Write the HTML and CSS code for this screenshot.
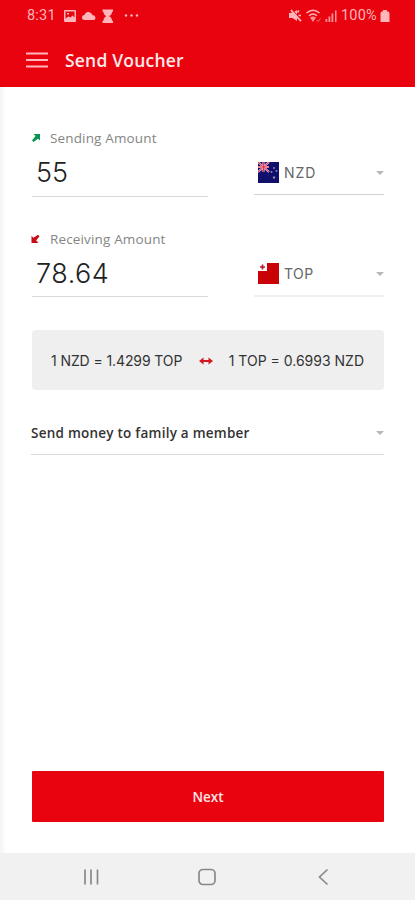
FILE: index.html
```html
<!DOCTYPE html>
<html lang="en">
<head>
<meta charset="utf-8">
<meta name="viewport" content="width=device-width, initial-scale=1">
<title>Send Voucher</title>
<link rel="stylesheet" href="styles.css">
</head>
<body>
<div class="screen">
  <header class="header">
    <div class="status">
      <span class="clock">8:31</span>
      <svg class="status-left" width="80" height="16" viewBox="0 0 80 16">
        <path fill-rule="evenodd" d="M2 2h10a1 1 0 0 1 1 1v10a1 1 0 0 1-1 1H2a1 1 0 0 1-1-1V3a1 1 0 0 1 1-1zm.5 1.500v7l3-2 2 1 2-2 2 2v-6zM4 5h2v1.500H4z"/>
        <path d="M21.500 12a2.500 2.500 0 0 1 0-5 4 4 0 0 1 7-1.500l1 1.800a2.400 2.400 0 0 1 1 4.700z"/>
        <path d="M39.500 1.500H50v2l-1 .5c0 2.500-1.500 3.500-3 4.200 1.500.7 3 1.800 3 4.300l1 .5v2H39.500v-2l1-.5c0-2.500 1.500-3.600 3-4.300-1.500-.7-3-1.700-3-4.200l-1-.5z"/>
        <circle cx="63" cy="7.500" r="1.200"/><circle cx="68.500" cy="7.500" r="1.200"/><circle cx="74" cy="7.500" r="1.200"/>
      </svg>
      <svg class="status-right" width="50" height="16" viewBox="0 0 50 16">
        <path d="M1 5h3.500L9 2v11L4.500 10H1z"/>
        <path d="M3 2L13 13" fill="none" stroke="#ffb5b9" stroke-width="2"/>
        <path d="M9.500 4.500l1.500-2M10.500 7.500H13" fill="none" stroke="#ffb5b9" stroke-width="1.500"/>
        <path d="M4 1.500L13.500 12" fill="none" stroke="#e8030f" stroke-width=".8"/>
        <g fill="none" stroke="#ffb5b9" stroke-width="1.400"><path d="M18.500 5c4-3.500 9-3.500 13 0M21 7.800c2.500-2.200 5.500-2.200 8 0"/></g>
        <path d="M25 14l-3-4.500q3-2 6 0z" opacity=".8"/>
        <path d="M28.500 12l1.500 1.500 2.500-3" fill="none" stroke="#f9747c" stroke-width="1"/>
        <path d="M37.500 11h1.800v3h-1.800zM40.500 8.500h1.800V14h-1.800zM43.500 5.500h1.800V14h-1.800zM47 2.500h1.500V14H47z" opacity=".8"/>
      </svg>
      <span class="percent">100%</span>
      <svg class="battery" width="10" height="14" viewBox="0 0 10 14"><path d="M3 1h4v1.500h1.500L9.500 4v9H.5V4L1.500 2.500H3z"/></svg>
    </div>
    <div class="toolbar">
      <svg class="menu" width="22" height="16" viewBox="0 0 22 16"><path d="M0 1.500h22M0 8h22M0 14.500h22"/></svg>
      <h1 class="title">Send Voucher</h1>
    </div>
  </header>
  <main class="content">
    <section class="amount">
      <div class="field">
        <div class="label">
          <svg width="10" height="10" viewBox="0 0 10 10" fill="#079552"><path d="M2.500 1H9v6.500L7 5.700 2.500 9 1 7.500 4.600 3z"/></svg>
          <span class="send-label">Sending Amount</span>
        </div>
        <div class="value value-send">55</div>
      </div>
      <div class="currency">
        <svg class="flag" width="21" height="21" viewBox="0 0 21 21">
          <path fill="#100f6b" d="M0 0h21v21H0z"/>
          <path d="M0 0l11 10M11 0L0 10M5.500 0v10M0 5h11" stroke="#f0c4d5" stroke-width="2"/>
          <path d="M0 0l11 10M11 0L0 10M5.500 0v10M0 5h11" stroke="#e33a54" stroke-width="1"/>
          <g fill="#8c83b2"><circle cx="16" cy="6" r="1"/><circle cx="13.500" cy="10" r="1"/><circle cx="18.500" cy="9" r="1"/><circle cx="16" cy="15.500" r="1.200"/></g>
        </svg>
        <span class="code nzd">NZD</span>
        <i class="caret"></i>
      </div>
    </section>
    <section class="amount">
      <div class="field field-receive">
        <div class="label">
          <svg width="10" height="10" viewBox="0 0 10 10" fill="#c90b14"><path d="M7.500 9H.5V2l2 1.800L7 .8 8.500 2.200 5.200 6.500z"/></svg>
          <span class="receive-label">Receiving Amount</span>
        </div>
        <div class="value value-receive">78.64</div>
      </div>
      <div class="currency currency-soft">
        <svg class="flag" width="21" height="21" viewBox="0 0 21 21">
          <path fill="#c80205" d="M0 0h21v21H0z"/><path fill="#fff" d="M0 0h9v8H0z"/><path d="M4.500 1.500v5M2 4h5" stroke="#b71931" stroke-width="1.700"/>
        </svg>
        <span class="code top">TOP</span>
        <i class="caret"></i>
      </div>
    </section>
    <section class="rates">
      <span class="rate-one">1 NZD = 1.4299 TOP</span>
      <svg width="14" height="8" viewBox="0 0 14 8"><path fill="#d21820" d="M0 4L4.500.500V3h5V.500L14 4 9.500 7.500V5h-5v2.500z"/></svg>
      <span class="rate-two">1 TOP = 0.6993 NZD</span>
    </section>
    <div class="reason"><span>Send money to family a member</span><i class="caret"></i></div>
    <button class="next">Next</button>
  </main>
  <nav class="navbar">
    <svg width="18" height="18" viewBox="0 0 18 18"><path d="M3 1.500v15M9 1.500v15M15.500 1.500v15"/></svg>
    <svg width="18" height="18" viewBox="0 0 18 18"><rect x="1" y="1.500" width="16" height="15" rx="4"/></svg>
    <svg width="18" height="18" viewBox="0 0 18 18"><path d="M13.500 1.500L5.500 9l8 7.500"/></svg>
  </nav>
</div>
</body>
</html>
```
FILE: styles.css
```css
* { box-sizing: border-box; }
body { margin: 0; background: #fff; font-family: "Open Sans", sans-serif; }
svg { display: block; flex: none; }
.screen { height: 900px; display: flex; flex-direction: column; overflow: hidden; }
.header { height: 87px; background: #e8030f; flex: none; }
.status { height: 31px; padding-left: 27px; display: flex; align-items: center; font: 14.5px/31px Roboto, sans-serif; color: #ffb5b9; }
.status svg { fill: #ffb5b9; }
.clock { width: 36px; letter-spacing: .2px; }
.status-right { margin-left: 145px; }
.percent { width: 38px; margin-left: 3px; letter-spacing: .2px; }
.battery { margin-left: 1px; }
.toolbar { height: 57px; padding-left: 26px; display: flex; align-items: center; }
.menu { stroke: #ffb5b9; stroke-width: 2.200; }
.title { margin: 0 0 0 17px; font-size: 17.500px; line-height: 24px; font-weight: 600; letter-spacing: .2px; color: #ffe9e9; white-space: nowrap; }
.content { height: 766px; flex: none; padding: 39px 31px 31px 32px; display: flex; flex-direction: column; background: linear-gradient(90deg, #f4f4f4 0, #f9f9f9 3px, #fff 6px); }
.amount { height: 101px; display: flex; justify-content: space-between; align-items: flex-start; }
.field { width: 176px; height: 71px; border-bottom: 1px solid #d9d9d9; }
.field-receive { height: 70px; }
.label { height: 24px; display: flex; align-items: center; gap: 9px; font-size: 13.500px; letter-spacing: .15px; color: #858585; white-space: nowrap; }
.label svg { margin-left: -1px; }
.value { padding-left: 4px; font: 300 27px/46px Inter, sans-serif; color: #222; }
.value-receive { letter-spacing: .5px; }
.currency { width: 130px; height: 43px; margin-top: 26px; padding: 0 0 1px 4px; display: flex; align-items: center; border-bottom: 1px solid #d0d0d0; }
.currency-soft { border-bottom: 2px solid #f0f0f0; height: 44px; }
.code { margin-left: 5px; font: 14px/20px Inter, sans-serif; color: #666; }
.nzd { letter-spacing: .9px; }
.top { letter-spacing: .4px; }
.caret { margin-left: auto; border: 4px solid transparent; border-top: 4px solid #b8b8b8; border-bottom: 0; }
.rates { height: 60px; margin-top: 2px; padding: 2px 20px 0 19px; display: flex; align-items: center; justify-content: space-between; background: #efefef; border-radius: 4px; font: 14px/20px Inter, sans-serif; color: #333; white-space: nowrap; }
.rate-one { letter-spacing: -.1px; }
.reason { height: 43px; margin-top: 22px; margin-left: -1px; display: flex; align-items: center; border-bottom: 1px solid #d9d9d9; font-size: 13.500px; letter-spacing: .24px; font-weight: 600; color: #333; }
.next { height: 51px; margin-top: auto; border: 0; border-radius: 1px; background: #e8030f; color: #ffe5e6; font: 600 13.500px/51px "Open Sans", sans-serif; padding: 1px 0 0; }
.navbar { height: 47px; padding: 0 83px 0 82px; display: flex; align-items: center; justify-content: space-between; background: #f1f1f1; }
.navbar svg { fill: none; stroke: #898989; stroke-width: 1.700; }
```
